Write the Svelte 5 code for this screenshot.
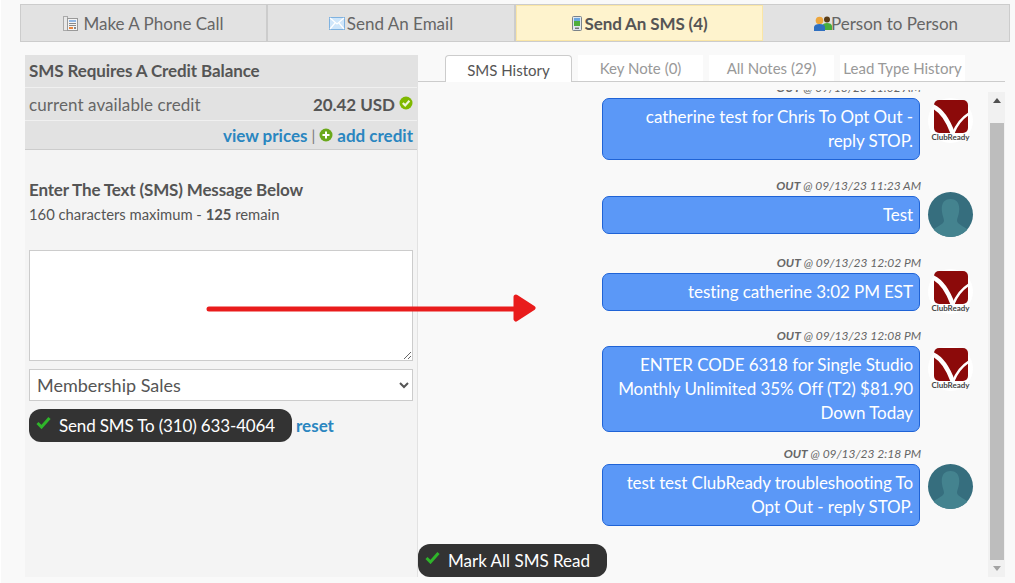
<script>
  const navItems = [
    { id: 'phone', label: 'Make A Phone Call' },
    { id: 'email', label: 'Send An Email' },
    { id: 'sms', label: 'Send An SMS (4)', active: true },
    { id: 'person', label: 'Person to Person' },
  ];

  const tabs = [
    { label: 'SMS History', active: true },
    { label: 'Key Note (0)' },
    { label: 'All Notes (29)' },
    { label: 'Lead Type History' },
  ];

  const messages = [
    { when: '09/13/23 11:02 AM', lines: ['catherine test for Chris To Opt Out -', 'reply STOP.'], who: 'club' },
    { when: '09/13/23 11:23 AM', lines: ['Test'], who: 'person' },
    { when: '09/13/23 12:02 PM', lines: ['testing catherine 3:02 PM EST'], who: 'club' },
    { when: '09/13/23 12:08 PM', lines: ['ENTER CODE 6318 for Single Studio', 'Monthly Unlimited 35% Off (T2) $81.90', 'Down Today'], who: 'club' },
    { when: '09/13/23 2:18 PM', lines: ['test test ClubReady troubleshooting To', 'Opt Out - reply STOP.'], who: 'person' },
  ];
</script>

{#snippet check()}
  <svg class="check" width="15" height="13" viewBox="0 0 15 13">
    <path d="M1.5 7 L5.5 11 L13.5 2" fill="none" stroke="#2fb52a" stroke-width="3"/>
  </svg>
{/snippet}

<div class="page">
  <nav class="nav">
    {#each navItems as item}
      <div class="nav-item" class:active={item.active}>
        {#if item.id === 'phone'}
          <svg class="ic-phone" width="15" height="15" viewBox="0 0 15 15">
            <rect x="0.5" y="0.5" width="4" height="14" fill="#e8e8e8" stroke="#aaa"/>
            <rect x="4.5" y="2.5" width="10" height="12" fill="#f4f4f4" stroke="#999"/>
            <rect x="6" y="4" width="7" height="2" fill="#8fb6e4"/>
            <rect x="6" y="7" width="7" height="1" fill="#888"/>
            <rect x="6" y="9" width="7" height="1" fill="#888"/>
            <rect x="6" y="11" width="4" height="2" fill="#e8843a"/>
            <rect x="11" y="11" width="2" height="2" fill="#888"/>
          </svg>
        {:else if item.id === 'email'}
          <svg width="16" height="13" viewBox="0 0 16 13">
            <rect x="0.5" y="0.5" width="15" height="12" fill="#cfe6fa" stroke="#7fb2e0"/>
            <path d="M1 1 L8 7 L15 1 M1 12 L6 6 M15 12 L10 6" fill="none" stroke="#fff" stroke-width="1.2"/>
          </svg>
        {:else if item.id === 'sms'}
          <svg class="ic-sms" width="10" height="15" viewBox="0 0 10 15">
            <rect x="0.5" y="0.5" width="9" height="14" rx="1" fill="#dfe6ee" stroke="#7a828a"/>
            <rect x="2" y="2" width="6" height="8" fill="#4fae3a"/>
            <rect x="2" y="2" width="6" height="3" fill="#6aa6e0"/>
            <rect x="3" y="11.500" width="4" height="1.500" fill="#777"/>
          </svg>
        {:else}
          <svg class="ic-person" width="18" height="15" viewBox="0 0 18 15">
            <circle cx="13" cy="3.500" r="3" fill="#5a3d18"/>
            <path d="M8 14 V10 Q9 7 13 7 Q17.500 7 18 10 V14 Z" fill="#49ad3c"/>
            <circle cx="5.500" cy="4.500" r="3.800" fill="#eda63c"/>
            <path d="M0 15 V11 Q0.500 8 5.500 8 Q10.500 8 11 11 V15 Z" fill="#2f6fc0"/>
          </svg>
        {/if}
        <span>{item.label}</span>
      </div>
    {/each}
  </nav>

  <div class="columns">
    <section class="left">
      <div class="row title">SMS Requires A Credit Balance</div>
      <div class="row credit">
        <span>current available credit</span>
        <span class="amount">
          <b>20.42 USD</b>
          <svg width="14" height="14" viewBox="0 0 14 14">
            <circle cx="7" cy="7" r="6.500" fill="#7fb800"/>
            <path d="M3.800 7 L6.200 9.400 L10.400 4.800" fill="none" stroke="#eef6dc" stroke-width="2.200"/>
          </svg>
        </span>
      </div>
      <div class="row links">
        <a href="#prices">view prices</a>
        <span class="sep">|</span>
        <svg width="14" height="14" viewBox="0 0 14 14">
          <circle cx="7" cy="7" r="6.500" fill="#6aa81a"/>
          <path d="M7 3.500 V10.500 M3.500 7 H10.500" stroke="#fff" stroke-width="2"/>
        </svg>
        <a href="#credit">add credit</a>
      </div>

      <div class="form">
        <h3>Enter The Text (SMS) Message Below</h3>
        <p>160 characters maximum - <b>125</b> remain</p>
        <textarea></textarea>
        <select>
          <option>Membership Sales</option>
        </select>
        <div class="actions">
          <button class="pill send">{@render check()}Send SMS To (310) 633-4064</button>
          <a href="#reset">reset</a>
        </div>
      </div>
    </section>

    <section class="right">
      <div class="tabs">
        {#each tabs as tab}
          <div class="tab" class:active={tab.active}>{tab.label}</div>
        {/each}
      </div>

      <div class="history">
        <div class="messages">
          {#each messages as msg}
            <div class="msg">
              <div class="body">
                <div class="meta"><b>OUT</b> @ {msg.when}</div>
                <div class="bubble">
                  {#each msg.lines as line}
                    <div>{line}</div>
                  {/each}
                </div>
              </div>
              {#if msg.who === 'club'}
                <div class="avatar club">
                  <svg width="34" height="33" viewBox="0 0 34 33">
                    <rect width="34" height="33" rx="5" fill="#8c0a0a"/>
                    <path d="M-2 6 C8 10 14 20 19 34" fill="none" stroke="#fff" stroke-width="4.500"/>
                    <path d="M19 34 C22 26 27 18 36 13" fill="none" stroke="#fff" stroke-width="2.500"/>
                  </svg>
                  <span>ClubReady</span>
                </div>
              {:else}
                <div class="avatar person">
                  <svg width="45" height="45" viewBox="0 0 45 45">
                    <path d="M22.500 7 C30 7 32 13 31 20 C30.500 24 29 26 29 29 C30 33 38 35 40 38 A22.500 22.500 0 0 1 5 38 C7 35 15 33 16 29 C16 26 14.500 24 14 20 C13 13 15 7 22.500 7 Z" fill="#44838f"/>
                  </svg>
                </div>
              {/if}
            </div>
          {/each}
        </div>
        <div class="scrollbar">
          <div class="arrow"></div>
          <div class="thumb"></div>
          <div class="arrow down"></div>
        </div>
        <button class="pill mark">{@render check()}Mark All SMS Read</button>
      </div>
    </section>
  </div>

  <svg class="pointer" width="332" height="32" viewBox="0 0 332 32">
    <path d="M3 16 H318" stroke="#e91c1c" stroke-width="5" stroke-linecap="round"/>
    <path d="M310 4 L327 15 L310 26 Z" fill="#e91c1c" stroke="#e91c1c" stroke-width="5" stroke-linejoin="round"/>
  </svg>
</div>

<style>
  :global(body) {
    margin: 0;
    background: #f9f9f9;
  }
  .page {
    position: relative;
    width: 1015px;
    height: 583px;
    box-sizing: border-box;
    padding: 4px 5px 6px 20px;
    border-left: 1px solid #fff;
    overflow: hidden;
    font-family: Lato, "Liberation Sans", sans-serif;
    color: #555;
  }
  .nav {
    display: grid;
    grid-template-columns: 247px 248px 247px 1fr;
    margin-left: -1px;
    height: 38px;
    box-sizing: border-box;
    border: 1px solid #ccc;
    background: #e2e2e2;
  }
  .nav-item {
    display: flex;
    align-items: center;
    justify-content: center;
    gap: 2px;
    font-size: 17px;
    color: #666;
    border-right: 2px solid #ccc;
  }
  .nav-item:last-child {
    border-right: none;
  }
  .nav-item.active {
    background: #fef3cd;
    font-weight: 700;
    color: #555;
    box-shadow: inset 0 0 0 1px #fae6a6;
    border-right: none;
    letter-spacing: -0.12px;
  }
  .ic-phone {
    margin-right: 3px;
  }
  .ic-sms {
    margin-right: 1px;
  }
  .ic-person {
    margin-right: -3px;
  }
  .columns {
    display: flex;
    height: 522px;
    margin: 13px 0 0 4px;
  }
  .left {
    width: 393px;
    flex: none;
    background: #f4f4f4;
    border-right: 1px solid #e2e2e2;
    box-sizing: border-box;
  }
  .row {
    background: #e2e2e2;
    padding: 0 4px;
    display: flex;
    align-items: center;
    font-size: 17px;
    box-sizing: border-box;
  }
  .title {
    height: 33px;
    padding-bottom: 2px;
    font-weight: 700;
    border-bottom: 1px solid #f0f0f0;
    color: #555;
    letter-spacing: -0.1px;
  }
  .credit {
    height: 33px;
    justify-content: space-between;
    border-bottom: 1px solid #f0f0f0;
    color: #666;
    letter-spacing: 0.08px;
  }
  .amount {
    display: flex;
    align-items: center;
    gap: 4px;
    color: #555;
    letter-spacing: -0.05px;
  }
  .amount svg {
    margin-top: -3px;
  }
  .links {
    height: 29px;
    justify-content: flex-end;
    gap: 4px;
    border-bottom: 1px solid #ccc;
    font-weight: 700;
  }
  .links .sep {
    font-weight: 400;
    color: #777;
    font-size: 15px;
  }
  a {
    color: #2a86c0;
    text-decoration: none;
  }
  .form {
    padding: 29px 4px 0;
  }
  h3 {
    margin: 0;
    font-size: 17px;
    line-height: 22px;
    font-weight: 700;
    color: #555;
    letter-spacing: -0.15px;
  }
  p {
    margin: 4px 0 0;
    font-size: 14.800px;
    line-height: 18px;
    color: #555;
  }
  textarea {
    display: block;
    width: 384px;
    height: 111px;
    margin-top: 27px;
    box-sizing: border-box;
    border: 1px solid #ccc;
    background: #fff;
  }
  select {
    display: block;
    width: 384px;
    height: 32px;
    margin-top: 8px;
    padding: 0 3px;
    box-sizing: border-box;
    border: 1px solid #ccc;
    border-radius: 0;
    background: #fff;
    font-family: inherit;
    font-size: 18px;
    color: #555;
  }
  .actions {
    display: flex;
    align-items: center;
    gap: 4px;
    margin-top: 8px;
    font-size: 17px;
    font-weight: 700;
  }
  .pill {
    display: flex;
    align-items: center;
    height: 33px;
    padding: 0 17px 0 7px;
    border: none;
    border-radius: 12px;
    background: #333;
    color: #fff;
    font-family: inherit;
    font-size: 17px;
    white-space: nowrap;
  }
  .send {
    letter-spacing: -0.15px;
  }
  .check {
    margin: -6px 8px 0 0;
  }
  .right {
    flex: 1;
    min-width: 0;
    display: flex;
    flex-direction: column;
  }
  .tabs {
    display: flex;
    height: 27px;
    box-sizing: border-box;
    padding-left: 27px;
    gap: 6px;
    border-bottom: 1px solid #ccc;
    margin-right: 5px;
  }
  .tab {
    height: 26px;
    background: #fff;
    width: 125px;
    box-sizing: border-box;
    text-align: center;
    font-size: 15px;
    line-height: 26px;
    color: #999;
  }
  .tab.active {
    width: 127px;
    height: 27px;
    border: 1px solid #ccc;
    border-bottom: none;
    border-radius: 4px 4px 0 0;
    color: #555;
    line-height: 28px;
  }
  .history {
    position: relative;
    flex: 1;
    min-height: 0;
    overflow: hidden;
  }
  .messages {
    display: flex;
    flex-direction: column;
    margin-top: 8px;
    padding-left: 184px;
    height: 450px;
    overflow: hidden;
  }
  .msg {
    display: flex;
    align-items: flex-start;
    gap: 8px;
    flex: none;
  }
  .msg:nth-child(1) {
    margin-top: -10px;
  }
  .msg:nth-child(2) {
    margin-top: 18px;
  }
  .msg:nth-child(3) {
    margin-top: 18px;
  }
  .msg:nth-child(4) {
    margin-top: 14px;
  }
  .msg:nth-child(5) {
    margin-top: 14px;
  }
  .body {
    width: 318px;
  }
  .meta {
    text-align: right;
    font-size: 12px;
    line-height: 15px;
    font-style: italic;
    color: #666;
    height: 15px;
    margin-bottom: 3px;
    margin-right: -1px;
  }
  .bubble {
    width: 318px;
    box-sizing: border-box;
    padding: 6px;
    background: #5b98f7;
    border: 1px solid #1f63d6;
    border-radius: 7px;
    color: #fff;
    font-size: 17px;
    line-height: 24px;
    text-align: right;
    letter-spacing: -0.07px;
  }
  .avatar {
    position: relative;
    width: 45px;
    height: 45px;
    border-radius: 50%;
    flex: none;
    margin-top: 14px;
    overflow: hidden;
  }
  .avatar.person {
    background: #366e7e;
  }
  .msg:nth-child(1) .avatar,
  .msg:nth-child(4) .avatar,
  .msg:nth-child(5) .avatar {
    margin-top: 18px;
  }
  .avatar.club {
    background: #fff;
    display: flex;
    flex-direction: column;
    align-items: center;
    padding-top: 2px;
    box-sizing: border-box;
    overflow: visible;
  }
  .avatar.club span {
    position: absolute;
    top: 35px;
    left: 0;
    right: 0;
    text-align: center;
    font-size: 8px;
    font-weight: 700;
    line-height: 8px;
    color: #444;
  }
  .scrollbar {
    position: absolute;
    top: 10px;
    left: 570px;
    width: 17px;
    height: 485px;
    background: #f1f1f1;
  }
  .arrow {
    margin: 6px auto 0;
    width: 0;
    height: 0;
    border-left: 4px solid transparent;
    border-right: 4px solid transparent;
    border-bottom: 5px solid #505050;
  }
  .arrow.down {
    margin-top: 6px;
    border-bottom: none;
    border-top: 5px solid #a3a3a3;
  }
  .thumb {
    margin: 20px 1px 0 2px;
    height: 437px;
    background: #bdbdbd;
  }
  .mark {
    position: absolute;
    left: 0;
    bottom: 0;
  }
  .pointer {
    position: absolute;
    left: 205px;
    top: 293px;
    pointer-events: none;
  }
</style>
